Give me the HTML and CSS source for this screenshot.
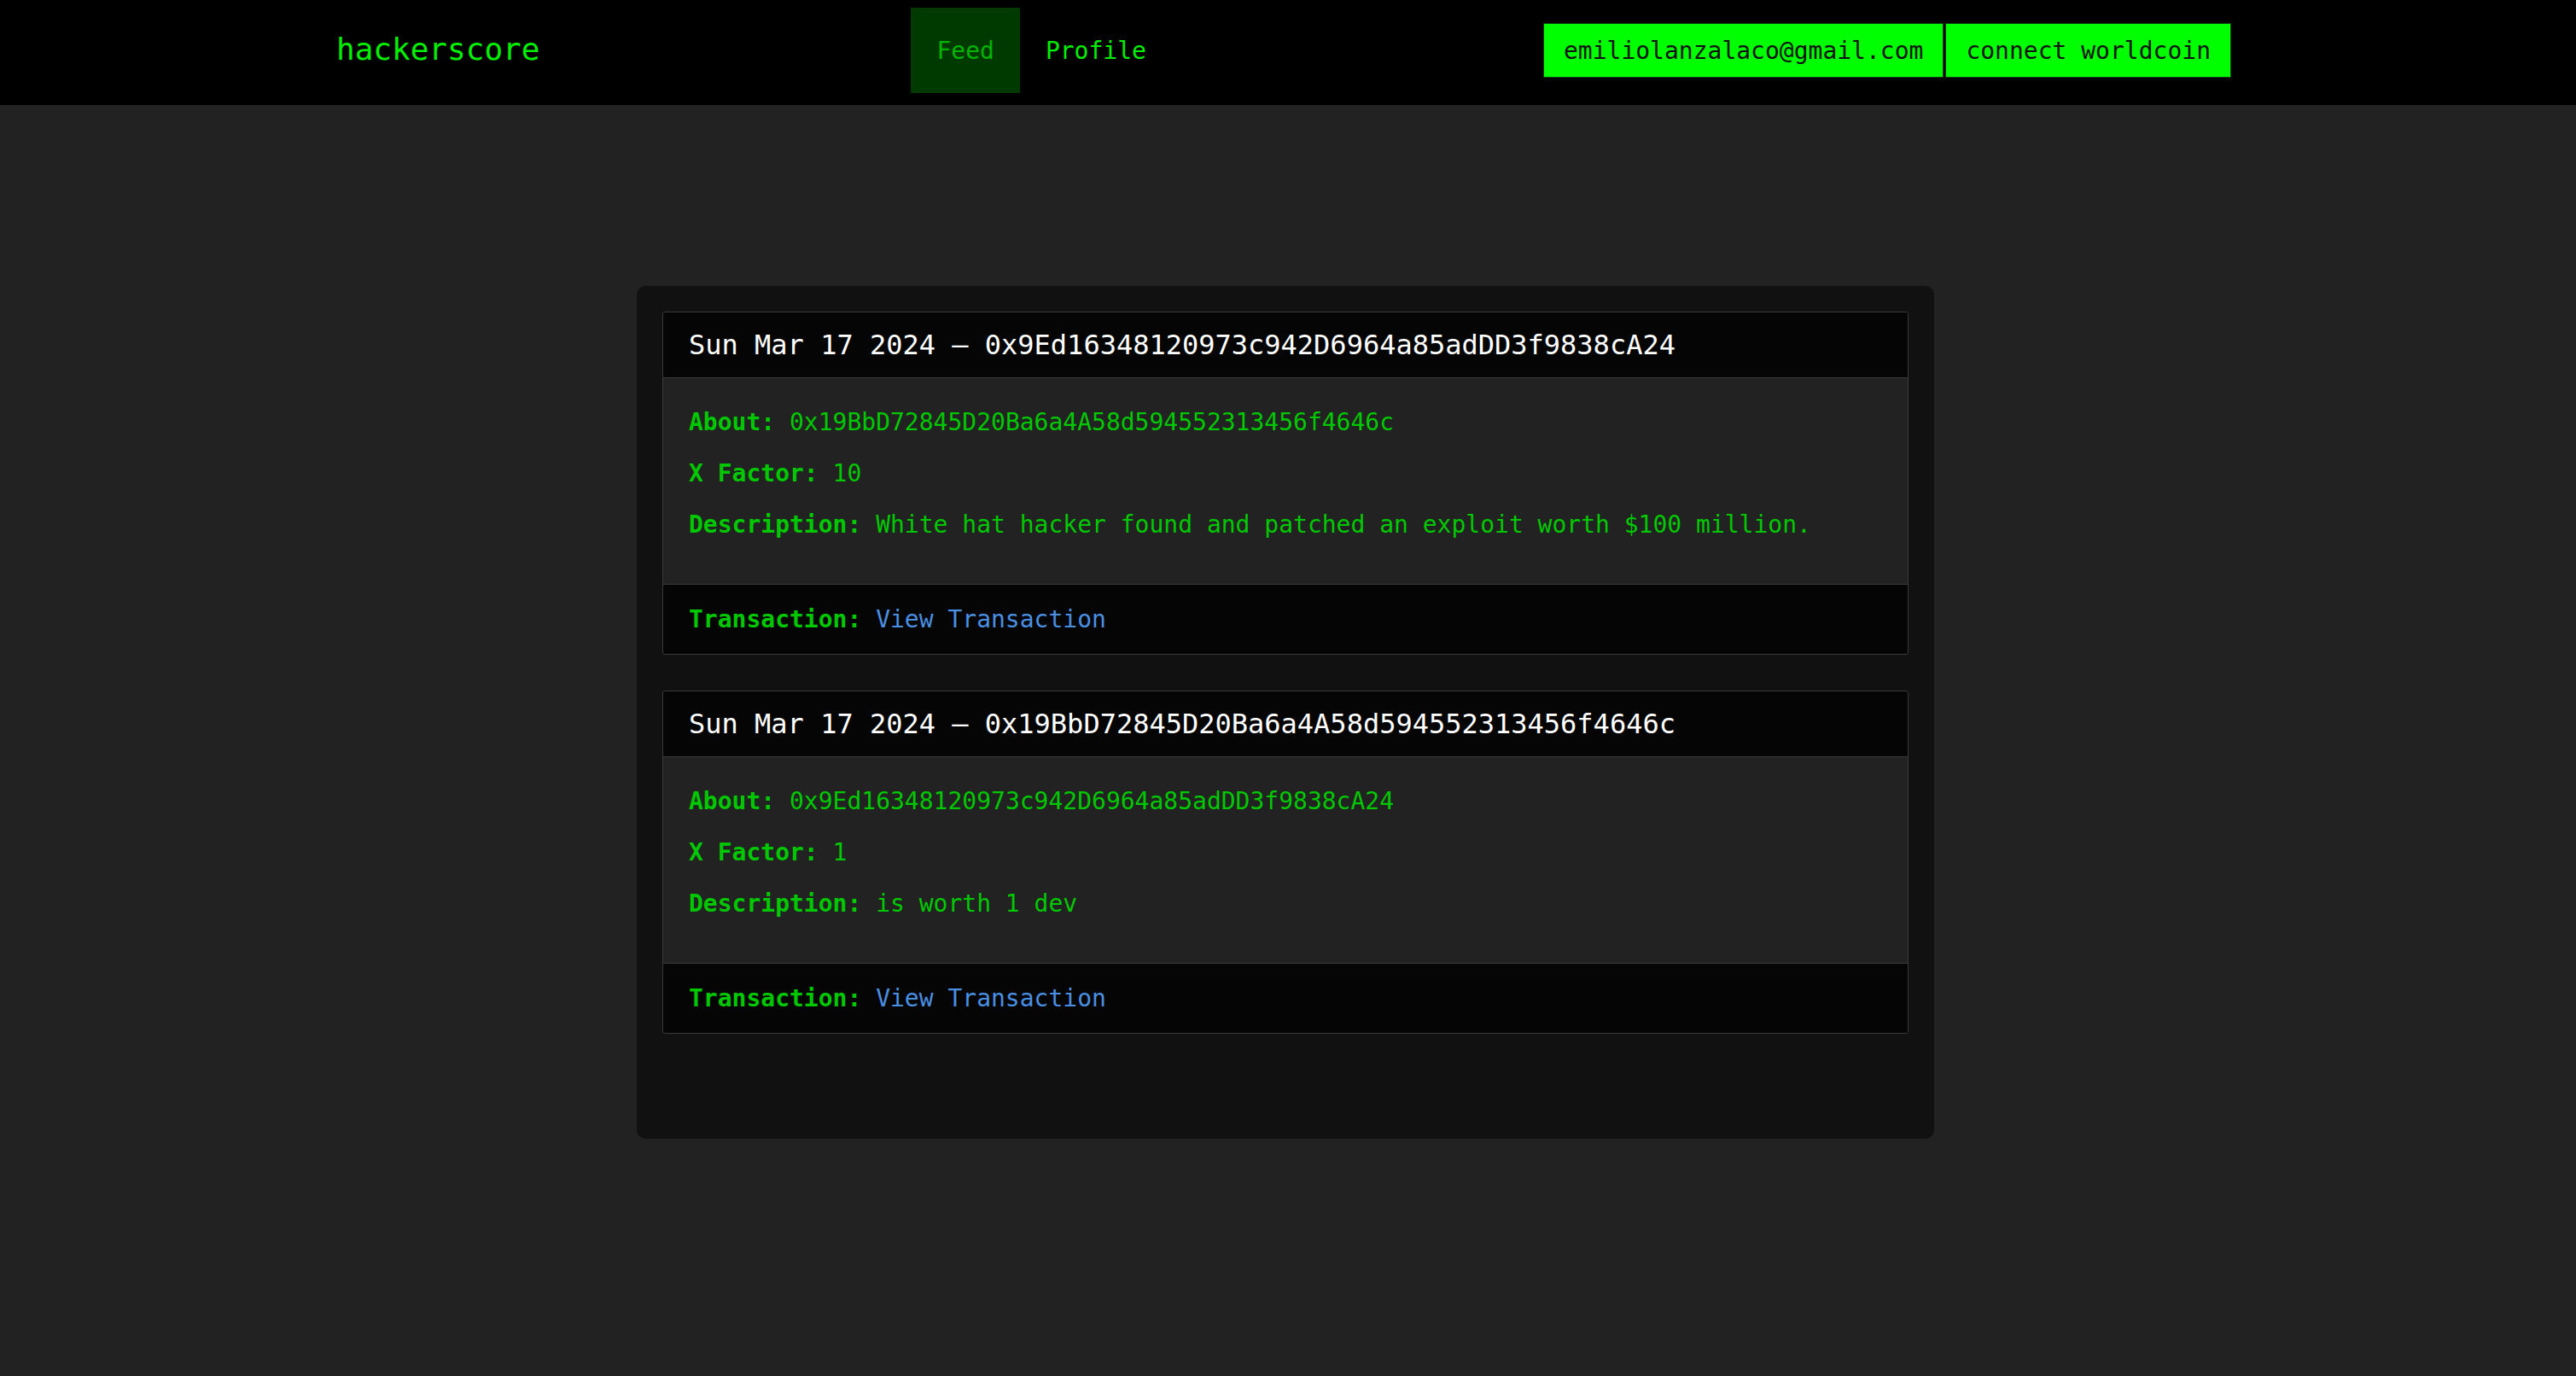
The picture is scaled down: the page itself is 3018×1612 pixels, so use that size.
FILE: index.html
```html
<!DOCTYPE html>
<html lang="en">
<head>
<meta charset="utf-8">
<title>hackerscore</title>
<link rel="stylesheet" href="styles.css">
</head>
<body>
<header class="topbar">
  <div class="topbar-inner">
    <a class="logo" href="#">hackerscore</a>
    <nav class="nav">
      <a class="nav-link active" href="#">Feed</a>
      <a class="nav-link" href="#">Profile</a>
    </nav>
    <div class="actions">
      <button class="btn">emiliolanzalaco@gmail.com</button>
      <button class="btn">connect worldcoin</button>
    </div>
  </div>
</header>
<main class="main">
  <section class="feed">
    <article class="card">
      <div class="card-header">Sun Mar 17 2024 – 0x9Ed16348120973c942D6964a85adDD3f9838cA24</div>
      <div class="card-body">
        <p><span class="label">About:</span> 0x19BbD72845D20Ba6a4A58d594552313456f4646c</p>
        <p><span class="label">X Factor:</span> 10</p>
        <p><span class="label">Description:</span> White hat hacker found and patched an exploit worth $100 million.</p>
      </div>
      <div class="card-footer"><span class="label">Transaction:</span> <a class="tx-link" href="#">View Transaction</a></div>
    </article>
    <article class="card">
      <div class="card-header">Sun Mar 17 2024 – 0x19BbD72845D20Ba6a4A58d594552313456f4646c</div>
      <div class="card-body">
        <p><span class="label">About:</span> 0x9Ed16348120973c942D6964a85adDD3f9838cA24</p>
        <p><span class="label">X Factor:</span> 1</p>
        <p><span class="label">Description:</span> is worth 1 dev</p>
      </div>
      <div class="card-footer"><span class="label">Transaction:</span> <a class="tx-link" href="#">View Transaction</a></div>
    </article>
  </section>
</main>
</body>
</html>
```

FILE: styles.css
```css
html, body {
  margin: 0;
  padding: 0;
  background: #222222;
}

body {
  min-height: 100vh;
  font-family: "DejaVu Sans Mono", "Liberation Mono", monospace;
}

.topbar {
  background: #000000;
  padding: 9px 10px 14px 0;
}

.topbar-inner {
  width: 2220px;
  margin: 0 auto;
  display: flex;
  justify-content: space-between;
  align-items: center;
  height: 100px;
}

.logo {
  font-size: 36px;
  color: #00f000;
  text-decoration: none;
  padding-bottom: 3px;
}

.nav {
  display: flex;
  height: 100px;
}

.nav-link {
  display: flex;
  align-items: center;
  height: 100px;
  padding: 0 30px;
  font-size: 28px;
  color: #00f000;
  text-decoration: none;
}

.nav-link.active {
  background: #003a00;
  color: #00b400;
}

.actions {
  display: flex;
  gap: 2px;
}

.btn {
  height: 64px;
  margin: 0;
  padding: 0 23px;
  border: 1px solid #0a400a;
  background: #00ff00;
  color: #111111;
  font-family: "DejaVu Sans Mono", "Liberation Mono", monospace;
  font-size: 28px;
  cursor: pointer;
}

.main {
  padding: 212px 6px 0 0;
}

.feed {
  width: 1460px;
  margin: 0 auto;
  padding: 30px 30px 123px;
  background: #111111;
  border-radius: 10px;
  display: flex;
  flex-direction: column;
  gap: 42px;
}

.card {
  border: 1px solid #3a3a3a;
  border-radius: 3px;
  background: #222222;
  overflow: hidden;
}

.card-header {
  background: #050505;
  color: #ffffff;
  font-size: 32px;
  line-height: 36px;
  padding: 20px 30px;
  border-bottom: 1px solid #3a3a3a;
  white-space: nowrap;
}

.card-body {
  padding: 33px 30px 28px;
  font-size: 28px;
  color: #00c800;
}

.card-body p {
  margin: 0 0 22px;
  line-height: 38px;
}

.card-footer {
  background: #050505;
  border-top: 1px solid #3a3a3a;
  padding: 22px 30px 21px;
  font-size: 28px;
  line-height: 38px;
  color: #00c800;
}

.label {
  font-weight: bold;
}

.tx-link {
  color: #4a90e2;
  text-decoration: none;
}
```
